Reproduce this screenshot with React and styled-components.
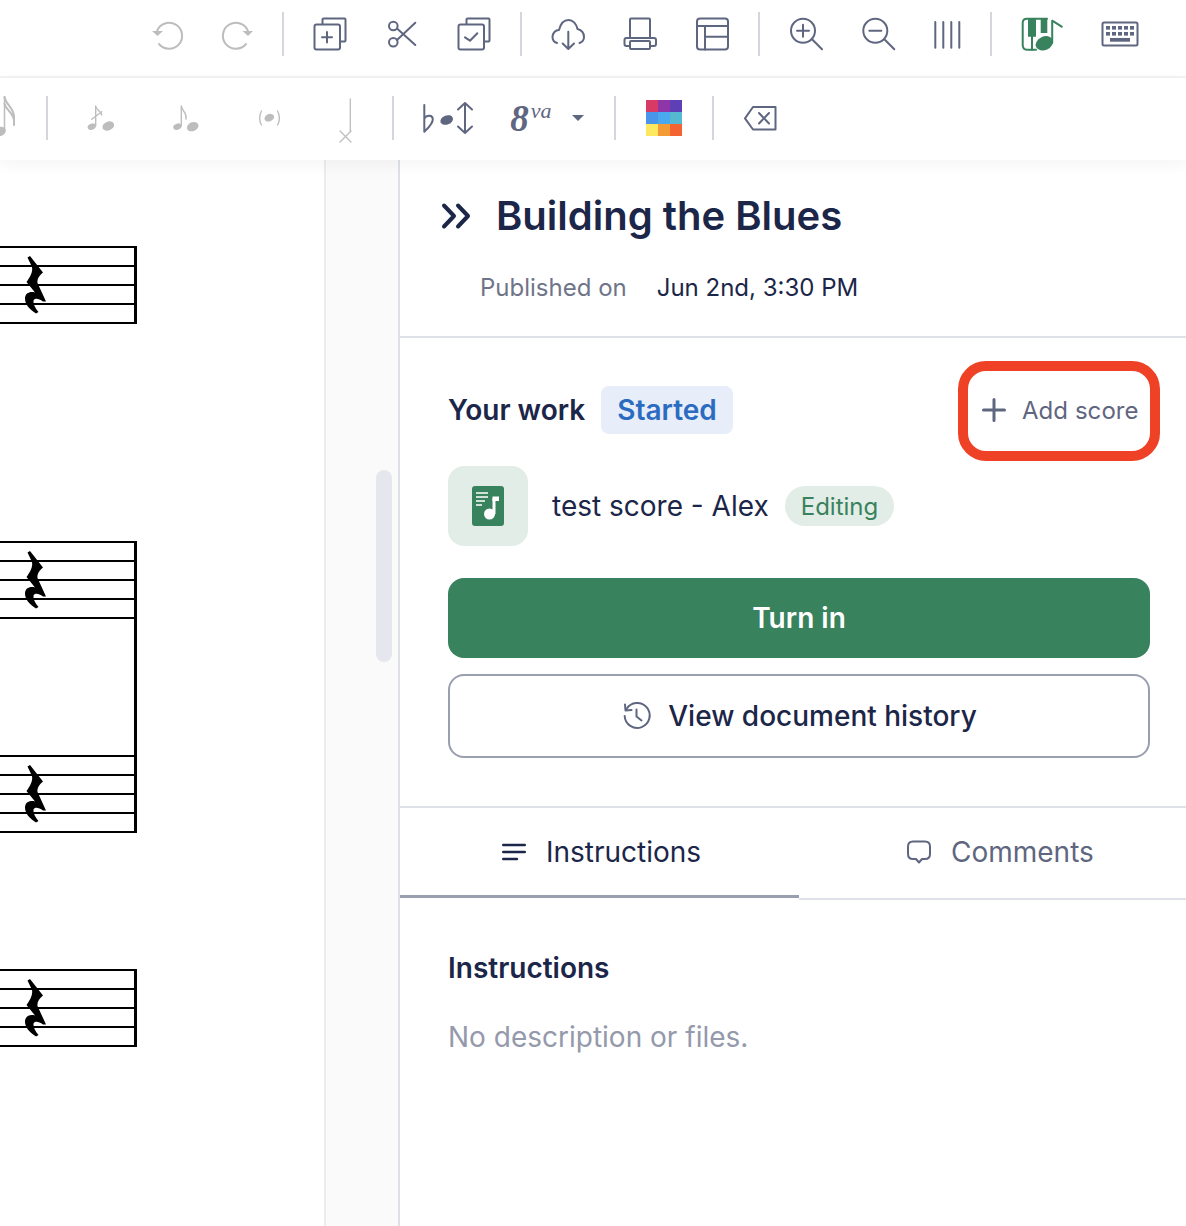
import React from "react";
import styled, { createGlobalStyle } from "styled-components";

const INK = "#1c2648";
const SLATE = "#5f6680";
const MUTED = "#bdbdbd";
const GREEN = "#38825d";
const LINE = "#dfe1e8";

const GlobalStyle = createGlobalStyle`
  html, body {
    margin: 0;
    padding: 0;
    background: #fff;
    font-family: Inter, "Liberation Sans", sans-serif;
    color: ${INK};
  }
`;

const Page = styled.div`
  width: 1186px;
  height: 1226px;
  overflow: hidden;
  display: flex;
  flex-direction: column;
`;

const Toolbar = styled.div`
  display: flex;
  align-items: flex-start;
  flex-shrink: 0;
  height: ${({ $height }) => $height}px;
  padding: ${({ $top }) => $top}px 0 0 ${({ $left }) => $left || 0}px;
  box-sizing: border-box;
  background: #fff;
`;

const TopBar = styled(Toolbar)`
  border-bottom: 2px solid #f3f3f5;
`;

const NoteBar = styled(Toolbar)`
  position: relative;
  z-index: 2;
  box-shadow: 0 4px 14px rgba(30, 30, 50, 0.05);
`;

const Slot = styled.div`
  width: ${({ $w }) => $w}px;
  height: 44px;
  flex-shrink: 0;
  display: flex;
  align-items: center;
  justify-content: center;
  overflow: ${({ $clip }) => ($clip ? "hidden" : "visible")};
`;

const ToolDivider = styled.div`
  width: 2px;
  height: 44px;
  flex-shrink: 0;
  margin: 0 10px;
  background: #d6d7de;
`;

const Icon = styled.svg`
  flex-shrink: 0;
  overflow: visible;
  fill: none;
  stroke: ${({ $color }) => $color || SLATE};
  stroke-width: ${({ $sw }) => $sw || 2};
  stroke-linecap: round;
  stroke-linejoin: round;
`;

const Tool = ({ children, color, sw, w = 44 }) => (
  <Icon width={w} height="44" viewBox={`0 0 ${w} 44`} $color={color} $sw={sw}>
    {children}
  </Icon>
);

const Octave = styled.div`
  display: flex;
  align-items: center;
  font-family: "Liberation Serif", serif;
  font-style: italic;
  font-weight: 700;
  color: ${SLATE};
  line-height: 1;
`;

const OctaveDigit = styled.span`
  font-size: 37px;
`;

const OctaveSup = styled.span`
  font-size: 22px;
  font-weight: 400;
  margin: -14px 0 0 2px;
`;

const Caret = styled.span`
  width: 0;
  height: 0;
  margin-left: 20px;
  border-left: 6px solid transparent;
  border-right: 6px solid transparent;
  border-top: 6px solid ${SLATE};
`;

const Palette = styled.div`
  display: grid;
  grid-template-columns: repeat(3, 12px);
  grid-auto-rows: 12px;
`;

const Swatch = styled.span`
  background: ${({ $c }) => $c};
`;

const Main = styled.div`
  flex: 1;
  display: flex;
  min-height: 0;
`;

const Score = styled.div`
  width: 324px;
  flex-shrink: 0;
  padding-top: 86px;
  box-sizing: border-box;
`;

const System = styled.div`
  width: 137px;
  box-sizing: border-box;
  margin-top: ${({ $mt }) => $mt || 0}px;
  border-right: 3px solid #000;
  display: flex;
  flex-direction: column;
  gap: 136px;
`;

const Staff = styled.div`
  position: relative;
  height: 78px;
  background: repeating-linear-gradient(
    to bottom,
    #000 0,
    #000 2px,
    #fff 2px,
    #fff 19px
  );
`;

const RestGlyph = styled.svg`
  position: absolute;
  left: 0;
  top: 1px;
  fill: #000;
`;

const Rest = () => (
  <RestGlyph width="60" height="78" viewBox="0 0 60 78">
    <path d="M27.5 10.5 L30 9 L43 25.5 C39 29 37 32 37.5 36 L46 54.5 L43 54.5 C38.5 51 34.5 51 33.5 53.5 C33 57 35 61 38.5 65 L36 66.5 C29 62 25 57 25 51.5 C25 46 30 44 35 45.5 L26.5 35 C30 30 33 25 32 20 Z" />
  </RestGlyph>
);

const Gutter = styled.div`
  width: 76px;
  flex-shrink: 0;
  box-sizing: border-box;
  background: #fafafa;
  border-left: 2px solid #ececee;
  border-right: 2px solid #dde1e7;
  padding: 310px 0 0 50px;
`;

const ScrollThumb = styled.div`
  width: 16px;
  height: 192px;
  border-radius: 8px;
  background: #e6e7ee;
`;

const Panel = styled.div`
  flex: 1;
  min-width: 0;
  display: flex;
  flex-direction: column;
`;

const PanelHead = styled.div`
  height: 178px;
  box-sizing: border-box;
  border-bottom: 2px solid ${LINE};
  padding-top: 31px;
`;

const TitleRow = styled.div`
  display: flex;
  align-items: center;
  height: 50px;
  padding-left: 40px;
  gap: 24px;
`;

const Title = styled.h1`
  margin: 0;
  font-size: 40px;
  font-weight: 600;
  line-height: 50px;
  color: ${INK};
`;

const MetaRow = styled.div`
  display: flex;
  gap: 30px;
  margin-top: 32px;
  padding-left: 80px;
  font-size: 24px;
  line-height: 30px;
`;

const MetaLabel = styled.span`
  color: #6f7589;
`;

const MetaValue = styled.span`
  color: ${INK};
`;

const Work = styled.section`
  height: 470px;
  box-sizing: border-box;
  border-bottom: 2px solid ${LINE};
  padding: 23px 0 0 48px;
`;

const WorkHead = styled.div`
  display: flex;
  align-items: center;
  justify-content: space-between;
  padding-right: 26px;
`;

const WorkTitle = styled.div`
  display: flex;
  align-items: center;
  gap: 16px;
  padding-bottom: 2px;
`;

const Strong = styled.span`
  font-size: 28px;
  font-weight: 600;
  color: ${INK};
`;

const StatusChip = styled.span`
  height: 48px;
  padding: 0 16px;
  display: flex;
  align-items: center;
  border-radius: 8px;
  background: #e8eef9;
  color: #2b6cc0;
  font-size: 28px;
  font-weight: 600;
`;

const AddButton = styled.button`
  width: 202px;
  height: 100px;
  box-sizing: border-box;
  display: flex;
  align-items: center;
  gap: 16px;
  padding: 0 0 2px 14px;
  border: 10px solid #ee4126;
  border-radius: 28px;
  background: #fff;
  color: ${SLATE};
  font: 400 24px Inter, sans-serif;
  letter-spacing: 0.05px;
`;

const ScoreRow = styled.div`
  display: flex;
  align-items: center;
  margin-top: 5px;
`;

const ScoreThumb = styled.div`
  width: 80px;
  height: 80px;
  border-radius: 16px;
  background: #e3ede7;
  display: flex;
  align-items: center;
  justify-content: center;
`;

const ScoreName = styled.span`
  margin: 0 16px 0 24px;
  font-size: 28px;
  color: ${INK};
`;

const EditingPill = styled.span`
  height: 40px;
  padding: 0 16px;
  display: flex;
  align-items: center;
  border-radius: 20px;
  background: #e3ede7;
  color: ${GREEN};
  font-size: 24px;
`;

const PrimaryButton = styled.button`
  display: block;
  width: 702px;
  height: 80px;
  margin-top: 32px;
  border: none;
  border-radius: 16px;
  background: ${GREEN};
  color: #fff;
  font: 600 28px Inter, sans-serif;
`;

const OutlineButton = styled.button`
  width: 702px;
  height: 84px;
  margin-top: 16px;
  box-sizing: border-box;
  display: flex;
  align-items: center;
  justify-content: center;
  gap: 17px;
  border: 2px solid #9a9fb0;
  border-radius: 16px;
  background: #fff;
  color: ${INK};
  font: 500 28px Inter, sans-serif;
`;

const Tabs = styled.div`
  display: flex;
  height: 92px;
`;

const Tab = styled.div`
  box-sizing: border-box;
  width: ${({ $w }) => $w}px;
  height: ${({ $active }) => ($active ? 90 : 92)}px;
  display: flex;
  align-items: center;
  gap: ${({ $gap }) => $gap}px;
  padding: 0 0 ${({ $active }) => ($active ? 0 : 2)}px ${({ $pl }) => $pl}px;
  border-bottom: ${({ $active }) =>
    $active ? "3px solid #9a9fb0" : `2px solid ${LINE}`};
  color: ${({ $active }) => ($active ? INK : SLATE)};
  font-size: 28px;
`;

const Body = styled.div`
  padding: 50px 0 0 48px;
`;

const BodyTitle = styled.div`
  font-size: 28px;
  font-weight: 600;
  line-height: 36px;
  color: ${INK};
`;

const Empty = styled.div`
  margin-top: 33px;
  font-size: 28px;
  line-height: 36px;
  color: #9499ab;
`;

const PALETTE = [
  "#d83a66",
  "#8e35a8",
  "#5f3fb5",
  "#4a94ea",
  "#4aa8ee",
  "#55b9d2",
  "#fde85f",
  "#f49b35",
  "#f26532",
];

const KEY_X = [8, 14, 20, 26, 32];

const Head = ({ cx, cy, rx, ry }) => (
  <ellipse
    cx={cx}
    cy={cy}
    rx={rx}
    ry={ry}
    transform={`rotate(-22 ${cx} ${cy})`}
    fill={MUTED}
    stroke="none"
  />
);

const Copy = ({ children }) => (
  <Tool>
    <rect x="6.5" y="12.5" width="25.5" height="25" rx="2" />
    <path d="M14.5 12 V7.5 Q14.5 6.5 15.5 6.5 H36.5 Q37.5 6.5 37.5 7.5 V28.5 Q37.5 29.5 36.5 29.5 H33" />
    {children}
  </Tool>
);

export default function App() {
  return (
    <Page>
      <GlobalStyle />
      <TopBar $height={78} $top={12} $left={131}>
        <Slot $w={72}>
          <Tool color={MUTED}>
            <path d="M12 19 A13 13 0 1 1 14 32" />
            <path d="M7 19 H18 L12.5 24 Z" fill={MUTED} stroke="none" />
          </Tool>
        </Slot>
        <Slot $w={69}>
          <Tool color={MUTED}>
            <path d="M32 19 A13 13 0 1 0 30 32" />
            <path d="M26.5 19 H37 L32 24 Z" fill={MUTED} stroke="none" />
          </Tool>
        </Slot>
        <ToolDivider />
        <Slot $w={72}>
          <Copy>
            <path d="M19 20 V30.5 M14 25.3 H24" />
          </Copy>
        </Slot>
        <Slot $w={72}>
          <Tool>
            <circle cx="13.3" cy="14" r="4.3" />
            <circle cx="13.3" cy="30.3" r="4.3" />
            <path d="M17 16.5 L35.3 33 M17 28 L35.3 10.7" />
          </Tool>
        </Slot>
        <Slot $w={72}>
          <Copy>
            <path d="M13 25.3 L18 28.7 L25.3 21.3" />
          </Copy>
        </Slot>
        <ToolDivider />
        <Slot $w={72}>
          <Tool>
            <path d="M11 31 C7.5 30 6.5 27 6.5 25 C6.5 21 9.5 18 13 18 C14.5 12 18 8 22.5 8 C27 8 30.5 12 31.5 17 C35.5 18 38 21 38 25 C38 28 36.5 30 33.5 31" />
            <path d="M22.3 19.7 V37 M16.7 31.5 L22.3 37 L28 31.5" />
          </Tool>
        </Slot>
        <Slot $w={72}>
          <Tool>
            <path d="M12 26 V7.5 Q12 6.5 13 6.5 H31 Q32 6.5 32 7.5 V26" />
            <rect x="6.5" y="26" width="31.5" height="8" rx="2" />
            <rect x="12" y="29" width="20" height="8" rx="1" fill="#fff" />
          </Tool>
        </Slot>
        <Slot $w={72}>
          <Tool>
            <rect x="7" y="6.5" width="31" height="31" rx="3" />
            <path d="M7 14 H38 M15 14 V37.5 M15 24.7 H38" />
          </Tool>
        </Slot>
        <ToolDivider />
        <Slot $w={72}>
          <Tool>
            <circle cx="19" cy="18.7" r="12" />
            <path d="M28.3 27.5 L38 37.3 M19 12.7 V24.7 M13 18.7 H25" />
          </Tool>
        </Slot>
        <Slot $w={72}>
          <Tool>
            <circle cx="19.3" cy="18.7" r="12" />
            <path d="M28.6 27.5 L38.3 37.3 M13.3 18.7 H25.3" />
          </Tool>
        </Slot>
        <Slot $w={66}>
          <Tool>
            <path d="M10.3 10 V35.7 M18.3 10 V35.7 M26.3 10 V35.7 M34.3 10 V35.7" />
          </Tool>
        </Slot>
        <ToolDivider />
        <Slot $w={78}>
          <Tool color={GREEN}>
            <path d="M17 37.7 H8 Q3.7 37.7 3.7 33 V11 Q3.7 6.7 8 6.7 H28" />
            <path d="M9 6 H17 V24.7 H9 Z M21.7 6 H28.3 V21 H21.7 Z" fill={GREEN} stroke="none" />
            <path d="M13 24 V37.7" />
            <ellipse cx="25.3" cy="31.3" rx="9" ry="6.8" transform="rotate(-25 25.3 31.3)" fill={GREEN} stroke="none" />
            <path d="M33.2 31 V8.7 L42.7 14.7" />
          </Tool>
        </Slot>
        <Slot $w={80}>
          <Tool>
            <rect x="4.5" y="10.5" width="35" height="23" rx="1.5" />
            {KEY_X.map((x) => (
              <rect key={x} x={x} y="14" width="4" height="3.6" fill={SLATE} stroke="none" />
            ))}
            {KEY_X.map((x) => (
              <rect key={x} x={x} y="20" width="4" height="3.6" fill={SLATE} stroke="none" />
            ))}
            <rect x="12" y="26" width="20" height="3.7" fill={SLATE} stroke="none" />
          </Tool>
        </Slot>
      </TopBar>

      <NoteBar $height={82} $top={18}>
        <Slot $w={36} $clip>
          <Tool w={36} color={MUTED} sw={1.5}>
            <ellipse cx="0" cy="35.5" rx="6" ry="4.5" fill={MUTED} stroke="none" transform="rotate(-22 0 35.5)" />
            <path d="M4.5 0.5 V35" />
            <path d="M4.5 1 C6 9 13 11 14 20 L14 29 M4.5 8 C7 15 13 17 14 24" strokeWidth="2" />
          </Tool>
        </Slot>
        <ToolDivider />
        <Slot $w={86}>
          <Tool color={MUTED} sw={1.4}>
            <Head cx={12.7} cy={30.7} rx={4.2} ry={3} />
            <Head cx={29.3} cy={30} rx={6} ry={4.4} />
            <path d="M16.7 10 V30 M16.7 10 C17 14 22 15 22.7 19 M12.7 23.3 L22.7 15.7" />
          </Tool>
        </Slot>
        <Slot $w={84}>
          <Tool color={MUTED} sw={1.4}>
            <Head cx={13.3} cy={30.7} rx={4.2} ry={3} />
            <Head cx={28.7} cy={30.7} rx={6} ry={4.4} />
            <path d="M17.3 10 V30 M17.3 10 C18 15 23 16 22 23" />
          </Tool>
        </Slot>
        <Slot $w={84}>
          <Tool color={MUTED} sw={1.4}>
            <Head cx={21.3} cy={21.7} rx={5} ry={3.6} />
            <path d="M13.5 15 C11 19 11 25 13.5 29 M29.5 15 C32 19 32 25 29.5 29" />
          </Tool>
        </Slot>
        <Slot $w={70}>
          <Tool color={MUTED} sw={1.3}>
            <path d="M25.3 3 V36 M15 35 L26 46 M26 35 L15 46" />
          </Tool>
        </Slot>
        <ToolDivider />
        <Slot $w={86}>
          <Tool w={60}>
            <path d="M7.3 9 V35.7 C10 33 16 28 15.8 23 C15.6 19 10 18.5 7.3 22.5" />
            <ellipse cx="29.7" cy="24" rx="6.5" ry="4.6" transform="rotate(-20 29.7 24)" fill={SLATE} stroke="none" />
            <path d="M48 7 V37 M41 13.5 L48 7 L55 13.5 M41 30.5 L48 37 L55 30.5" />
          </Tool>
        </Slot>
        <Slot $w={114}>
          <Octave>
            <OctaveDigit>8</OctaveDigit>
            <OctaveSup>va</OctaveSup>
            <Caret />
          </Octave>
        </Slot>
        <ToolDivider />
        <Slot $w={76}>
          <Palette>
            {PALETTE.map((c) => (
              <Swatch key={c} $c={c} />
            ))}
          </Palette>
        </Slot>
        <ToolDivider />
        <Slot $w={72}>
          <Tool>
            <path d="M37.5 11 H15 L7 22.3 L15 33.5 H37.5 Z" />
            <path d="M21 17 L31 27.5 M31 17 L21 27.5" />
          </Tool>
        </Slot>
      </NoteBar>

      <Main>
        <Score>
          <System>
            <Staff>
              <Rest />
            </Staff>
          </System>
          <System $mt={217}>
            <Staff>
              <Rest />
            </Staff>
            <Staff>
              <Rest />
            </Staff>
          </System>
          <System $mt={136}>
            <Staff>
              <Rest />
            </Staff>
          </System>
        </Score>
        <Gutter>
          <ScrollThumb />
        </Gutter>
        <Panel>
          <PanelHead>
            <TitleRow>
              <Icon width="32" height="28" viewBox="0 0 32 28" $color={INK} $sw={4}>
                <path d="M4 3.5 L14 14 L4 24.5 M18 3.5 L28 14 L18 24.5" />
              </Icon>
              <Title>Building the Blues</Title>
            </TitleRow>
            <MetaRow>
              <MetaLabel>Published on</MetaLabel>
              <MetaValue>Jun 2nd, 3:30 PM</MetaValue>
            </MetaRow>
          </PanelHead>

          <Work>
            <WorkHead>
              <WorkTitle>
                <Strong>Your work</Strong>
                <StatusChip>Started</StatusChip>
              </WorkTitle>
              <AddButton>
                <Icon width="24" height="24" viewBox="0 0 24 24" $sw={3}>
                  <path d="M12 1.5 V22.5 M1.5 12 H22.5" />
                </Icon>
                Add score
              </AddButton>
            </WorkHead>
            <ScoreRow>
              <ScoreThumb>
                <svg width="32" height="40" viewBox="0 0 32 40">
                  <rect width="32" height="40" rx="3" fill={GREEN} />
                  <path d="M4 7 H16 M4 11 H16 M4 15 H13 M4 19 H10" stroke="#fff" strokeWidth="1.6" />
                  <path d="M22 12 V28" stroke="#fff" strokeWidth="3" />
                  <circle cx="17.5" cy="28" r="5.5" fill="#fff" />
                  <path d="M20.5 10.5 H27 V15 H20.5 Z" fill="#fff" />
                </svg>
              </ScoreThumb>
              <ScoreName>test score - Alex</ScoreName>
              <EditingPill>Editing</EditingPill>
            </ScoreRow>
            <PrimaryButton>Turn in</PrimaryButton>
            <OutlineButton>
              <Icon width="30" height="30" viewBox="-1 0 30 30" $sw={2}>
                <path d="M4.5 8 A12.5 12.5 0 1 1 2.7 15" />
                <path d="M3 3.5 L3.5 9.5 L9.5 9" />
                <path d="M14.5 8.5 V15.5 L19.5 19.5" />
              </Icon>
              View document history
            </OutlineButton>
          </Work>

          <Tabs>
            <Tab $active $w={399} $pl={102} $gap={20}>
              <Icon width="24" height="18" viewBox="0 0 24 18" $color={INK} $sw={2.4}>
                <path d="M1.2 2 H22.8 M1.2 9 H22.8 M1.2 16 H15" />
              </Icon>
              Instructions
            </Tab>
            <Tab $w={387} $pl={108} $gap={20}>
              <Icon width="24" height="24" viewBox="0 0 24 24" $sw={2}>
                <path d="M6 1.5 H18 Q23 1.5 23 6.5 V14 Q23 19 18 19 H15 L12 22.5 L9 19 H6 Q1 19 1 14 V6.5 Q1 1.5 6 1.5 Z" />
              </Icon>
              Comments
            </Tab>
          </Tabs>

          <Body>
            <BodyTitle>Instructions</BodyTitle>
            <Empty>No description or files.</Empty>
          </Body>
        </Panel>
      </Main>
    </Page>
  );
}
